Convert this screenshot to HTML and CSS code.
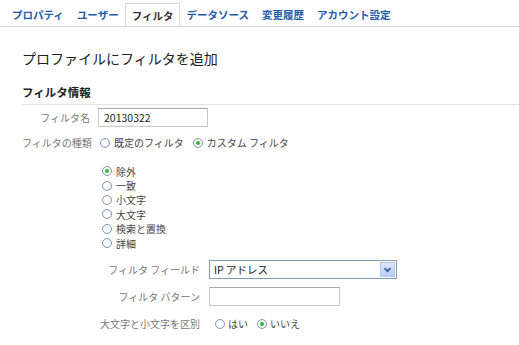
FILE: index.html
```html
<!DOCTYPE html>
<html lang="ja">
<head>
    <meta charset="UTF-8">
    <title>フィルタを追加</title>
    <link rel="stylesheet" href="styles.css">
</head>
<body>
    <ul class="tabs">
        <li>プロパティ</li>
        <li>ユーザー</li>
        <li class="active">フィルタ</li>
        <li>データソース</li>
        <li>変更履歴</li>
        <li>アカウント設定</li>
    </ul>

    <div class="content">
        <h1>プロファイルにフィルタを追加</h1>
        <h2>フィルタ情報</h2>

        <div class="row">
            <label class="label">フィルタ名</label>
            <div class="textbox name">20130322</div>
        </div>

        <div class="row kind">
            <label class="label">フィルタの種類</label>
            <div class="choices">
                <span class="radio"></span><span>既定のフィルタ</span>
                <span class="radio on"></span><span>カスタム フィルタ</span>
            </div>
        </div>

        <ul class="options">
            <li><span class="radio on"></span>除外</li>
            <li><span class="radio"></span>一致</li>
            <li><span class="radio"></span>小文字</li>
            <li><span class="radio"></span>大文字</li>
            <li><span class="radio"></span>検索と置換</li>
            <li><span class="radio"></span>詳細</li>
        </ul>

        <div class="sub">
            <div class="row">
                <label class="label">フィルタ フィールド</label>
                <div class="select">
                    <span>IP アドレス</span>
                    <span class="arrow">
                        <svg width="9" height="6" viewBox="0 0 9 6"><path d="M1.5 1.2 L4.5 4.2 L7.5 1.2" fill="none" stroke="#3d5a9c" stroke-width="1.8"/></svg>
                    </span>
                </div>
            </div>
            <div class="row">
                <label class="label">フィルタ パターン</label>
                <div class="textbox pattern"></div>
            </div>
            <div class="row">
                <label class="label">大文字と小文字を区別</label>
                <div class="choices tight">
                    <span class="radio"></span><span>はい</span>
                    <span class="radio on"></span><span>いいえ</span>
                </div>
            </div>
        </div>
    </div>
</body>
</html>
```

FILE: styles.css
```css
body {
    margin: 0;
    font-family: "Noto Sans CJK JP", "Noto Sans", sans-serif;
    font-size: 10px;
    color: #555;
    background: #fff;
}

.tabs {
    list-style: none;
    margin: 0;
    padding: 4px 0 0 5.5px;
    display: flex;
    height: 22px;
    border-bottom: 1px solid #d6d6d6;
}

.tabs li {
    padding: 0 6.5px;
    line-height: 22px;
    font-size: 10.5px;
    font-weight: bold;
    color: #1f5ca8;
}

.tabs li.active {
    color: #333;
    background: #fff;
    border: 1px solid #d6d6d6;
    border-bottom: none;
    height: 22px;
    margin: -1px 0 -1px 0;
    padding: 0 5.5px;
    line-height: 24px;
}

.content {
    padding: 0 0 0 22px;
}

h1 {
    margin: 20px 0 0;
    font-size: 14px;
    font-weight: normal;
    color: #222;
    line-height: 22px;
}

h2 {
    margin: 15px 0 0;
    font-size: 11.5px;
    font-weight: bold;
    color: #222;
    line-height: 16px;
    padding-bottom: 4px;
    border-bottom: 1px solid #e3e3e3;
}

.row {
    display: flex;
    align-items: center;
}

.label {
    width: 68px;
    text-align: right;
    margin-right: 8px;
    color: #777;
    white-space: nowrap;
}

.row:first-of-type {
    margin-top: 3px;
}

.textbox {
    box-sizing: border-box;
    height: 19px;
    border: 1px solid #c8c8c8;
    border-top-color: #a8a8a8;
    padding: 0 5px;
    line-height: 17px;
    color: #222;
    font-size: 10.5px;
}

.name {
    width: 110px;
}

.kind {
    margin-top: 8px;
}

.choices {
    display: flex;
    align-items: center;
    margin-left: 2px;
    color: #444;
}

.choices .radio {
    margin-right: 4px;
}

.choices span + .radio {
    margin-left: 9px;
}

.radio {
    display: inline-block;
    box-sizing: border-box;
    width: 10px;
    height: 10px;
    border: 1px solid #7f98b4;
    border-radius: 50%;
    background: radial-gradient(circle, #fff 40%, #e6ecf2 100%);
    position: relative;
}

.radio.on::after {
    content: "";
    position: absolute;
    left: 2px;
    top: 2px;
    width: 4px;
    height: 4px;
    border-radius: 50%;
    background: #2eb82e;
}

.options {
    list-style: none;
    margin: 14px 0 0 80px;
    padding: 0;
    color: #444;
}

.options li {
    display: flex;
    align-items: center;
    height: 14.4px;
}

.options .radio {
    margin-right: 4px;
}

.sub {
    margin-top: 10px;
}

.sub .label {
    width: 178px;
    margin-right: 9px;
}

.sub .row {
    height: 19px;
    margin-top: 8px;
}

.sub .row:first-child {
    margin-top: 3px;
}

.select {
    box-sizing: border-box;
    width: 188px;
    height: 19px;
    border: 1px solid #7f9db9;
    display: flex;
    justify-content: space-between;
    align-items: center;
    padding-left: 4px;
    color: #222;
    font-size: 10.5px;
}

.arrow {
    width: 15px;
    height: 15px;
    margin-right: 1px;
    background: linear-gradient(#dce6fb, #bccdf2);
    border: 1px solid #b6c7ec;
    box-sizing: border-box;
    display: flex;
    align-items: center;
    justify-content: center;
}

.pattern {
    width: 131px;
}

.tight .radio {
    margin-left: 4px;
    margin-right: 3px;
}

.tight span + .radio {
    margin-left: 9px;
}
```
